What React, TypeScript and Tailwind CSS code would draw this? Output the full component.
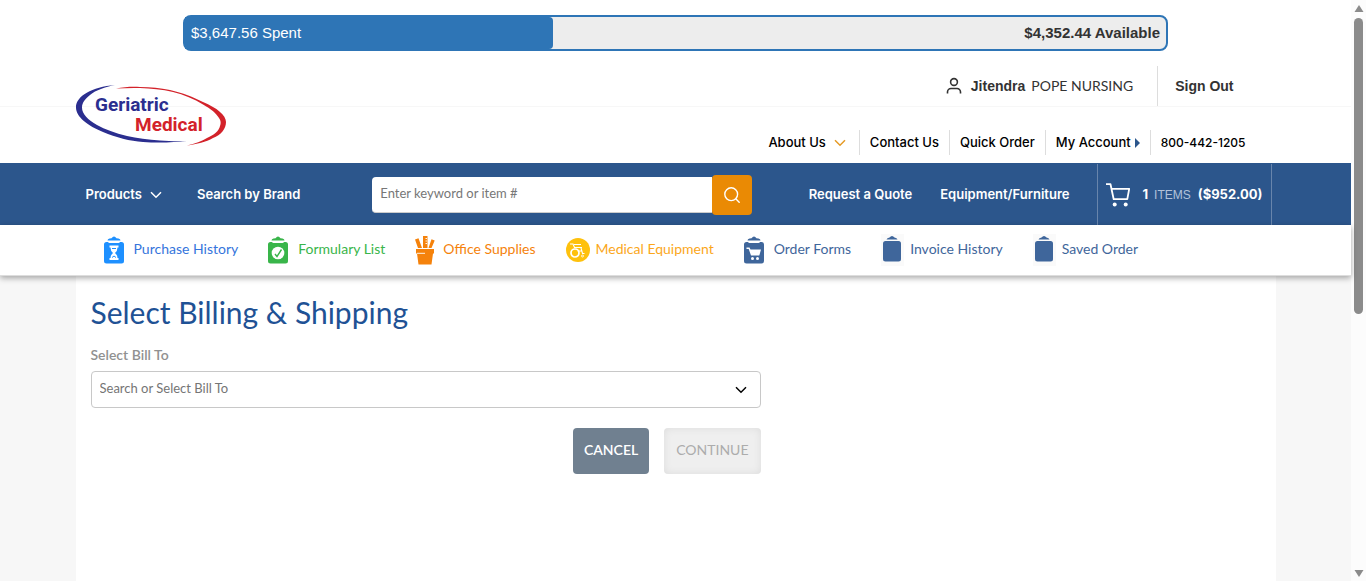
import React from "react";

type IconProps = { className?: string };

const Logo = () => (
  <svg width="151" height="61" viewBox="0 0 151 61" role="img" aria-label="Geriatric Medical">
    <path
      fill="#2b2e8f"
      d="M39 0C16 2 0 11 0 22.500C0 32 12 41 27 47C40 52.500 54 56.200 67 57C82 58 98 57.500 111 56C101 56.500 92 56 84 55.500C72 54.500 61 53 51 51C39 48 29 44.500 21 40C12 35 6 29 6 22.500C6 18 9 14 14 10C20 5 29 2 39 0Z"
    />
    <path
      fill="#d3222a"
      d="M40 3.500C48 2 56 1.500 64 2C75 2 84 3 94 5C107 8 117 12 127 17C141 23 150 30 150 37C150 44 145 50 137 53C130 57 121 59 111 60.500C119 58.500 126 56 131 53C138 50 143 46 144 41C145 38 145 36 143 33C140 28 135 24 127 19.500C118 14 108 9.500 97 7C86 4.500 75 3.300 64 3C56 2.800 48 3 40 3.500Z"
    />
    <text x="19" y="26" fill="#2b2e8f" fontSize="19" fontWeight="700" fontFamily="Roboto, sans-serif">
      Geriatric
    </text>
    <text x="59" y="46" fill="#d3222a" fontSize="19" fontWeight="700" fontFamily="Roboto, sans-serif">
      Medical
    </text>
  </svg>
);

const UserIcon = () => (
  <svg width="16" height="18" viewBox="0 0 16 18" fill="none" stroke="#333" strokeWidth="1.6" aria-hidden="true">
    <circle cx="8" cy="5" r="3.400" />
    <path d="M1.500 16.500V15a3.500 3.500 0 0 1 3.500-3.500h6a3.500 3.500 0 0 1 3.500 3.500v1.500" />
  </svg>
);

const Chevron = ({ className }: IconProps) => (
  <svg className={className} width="12" height="8" viewBox="0 0 12 8" fill="none" stroke="currentColor" strokeWidth="1.500" aria-hidden="true">
    <path d="M1 1.200l5 5 5-5" />
  </svg>
);

const SearchIcon = () => (
  <svg width="16" height="16" viewBox="0 0 16 16" fill="none" stroke="#fff" strokeWidth="1.400" strokeLinecap="round" aria-hidden="true">
    <circle cx="7.200" cy="7.200" r="6.400" />
    <path d="M12 12l3.200 3.200" />
  </svg>
);

const CartIcon = () => (
  <svg width="24" height="24" viewBox="0 0 24 24" fill="none" stroke="#fff" strokeWidth="1.800" strokeLinejoin="round" aria-hidden="true">
    <path d="M0 1.200h4.500l3.200 15h13.600L23.200 5.800H5.500" />
    <circle cx="8.700" cy="21.500" r="2" fill="#fff" stroke="none" />
    <circle cx="19.700" cy="21.500" r="2" fill="#fff" stroke="none" />
  </svg>
);

const Board = ({ color, children }: { color: string; children?: React.ReactNode }) => (
  <svg width="20" height="28" viewBox="0 0 20 28" aria-hidden="true">
    <path fill={color} d="M3.500 4.500Q3.500 3 5.500 2.600L7.500 2.200Q10-1.200 12.500 2.200l2 .4q2 .4 2 1.900z" />
    <path fill={color} d="M2.500 6H4q.5 1 1.500 1h9q1 0 1.500-1h1.500Q20 6 20 8.500V25q0 2.500-2.500 2.500h-15Q0 27.500 0 25V8.500Q0 6 2.500 6z" />
    {children}
  </svg>
);

const HistoryIcon = () => (
  <Board color="#1e90ff">
    <path fill="#fff" d="M5.500 9.500h9v2h-1q0 3.500-2.500 5.500 2.500 2 2.500 5h1v2h-9v-2h1q0-3 2.500-5-2.500-2-2.500-5.500h-1z" />
    <path stroke="#1e90ff" strokeWidth="1" fill="none" d="M8 12.500h4M8 21.500q2-3 4 0" />
  </Board>
);

const FormularyIcon = () => (
  <Board color="#39b54a">
    <circle cx="10" cy="17" r="6.300" fill="#fff" />
    <path d="M7 18l2 2.500 4.500-7" fill="none" stroke="#39b54a" strokeWidth="1.400" />
  </Board>
);

const OrderIcon = () => (
  <Board color="#3f669b">
    <path fill="#fff" d="M2.500 11.500h3l1 2h10.500l-1.700 6H7l-2.300-6.500H2.500z" />
    <circle cx="8.500" cy="22.500" r="1.500" fill="#fff" />
    <circle cx="13.500" cy="22.500" r="1.500" fill="#fff" />
  </Board>
);

const PlainIcon = () => (
  <svg width="23" height="32" viewBox="0 0 23 32" aria-hidden="true">
    <rect width="23" height="32" fill="#fafafa" />
    <path fill="#3f669b" d="M5.500 5.500Q6 4 8.500 3.500q2.500-3 5 0Q16 4 16.500 5.500z" />
    <rect x="2" y="7" width="18" height="20.500" rx="2.500" fill="#3f669b" />
  </svg>
);

const SuppliesIcon = () => (
  <svg width="20" height="29" viewBox="0 0 20 29" fill="#f5820b" aria-hidden="true">
    <path d="M0 3.500l3.500-1.200L7 12H3zM8 0h4.500v12H8zM16.500 3.200l3.200 1.300L16.500 12h-3z" />
    <path d="M1 13h18v4.500h-1L16.500 28.500h-13L2 17.500H1z" />
    <path d="M10.500 2.500H12M10.500 5H12M10.500 7.500H12M2 17.300h8" stroke="#fff" strokeWidth=".9" />
  </svg>
);

const WheelchairIcon = () => (
  <svg width="24" height="24" viewBox="0 0 24 24" fill="none" stroke="#fff" strokeWidth="1.100" aria-hidden="true">
    <circle cx="12" cy="12" r="12" fill="#fec10d" stroke="none" />
    <circle cx="9" cy="15" r="4" strokeWidth="1.700" />
    <path d="M4 6h3l1.500 3.500M8 6.500h7M8 9.500h8M15 10l1.500 5.500h2M11.500 13h4" />
    <circle cx="16.500" cy="18" r="1" strokeWidth=".8" />
  </svg>
);

const quickLinks = [
  { label: "Purchase History", icon: <HistoryIcon />, color: "text-[#3575dc]", gap: "gap-[10px]" },
  { label: "Formulary List", icon: <FormularyIcon />, color: "text-[#39b54a]", gap: "gap-[10px]" },
  { label: "Office Supplies", icon: <SuppliesIcon />, color: "text-[#f5820b]", gap: "gap-2" },
  { label: "Medical Equipment", icon: <WheelchairIcon />, color: "text-[#fba71b]", gap: "gap-[6px]" },
  { label: "Order Forms", icon: <OrderIcon />, color: "text-[#3f669b]", gap: "gap-[10px]" },
  { label: "Invoice History", icon: <PlainIcon />, color: "text-[#3f669b]", gap: "gap-[6px]" },
  { label: "Saved Order", icon: <PlainIcon />, color: "text-[#3f669b]", gap: "gap-[6px]" },
];

const Header = () => (
  <header className="shrink-0 bg-white">
    <div className="mx-auto mt-[15px] flex h-9 max-w-[985px] items-center justify-between rounded-lg border-2 border-[#2e75b6] bg-[#ededed] font-['Liberation_Sans',sans-serif] text-[15px]">
      <div className="flex h-full w-[37.500%] items-center rounded-r bg-[#2e75b6] pl-[6px] text-white">$3,647.56 Spent</div>
      <div className="pr-[6px] font-bold text-[#333]">$4,352.44 Available</div>
    </div>

    <div className="bg-[linear-gradient(#f7f7f7,#f7f7f7)] bg-[length:100%_1px] bg-[position:0_55px] bg-no-repeat">
      <div className="mx-auto flex h-28 max-w-[1200px] items-start justify-between">
        <a href="#home" className="mt-[34px]">
          <Logo />
        </a>
        <div className="flex flex-col items-end pt-[15px]">
          <div className="mr-[42px] flex h-10 items-center text-[14px] text-[#333]">
            <UserIcon />
            <span className="ml-[9px] font-['Liberation_Sans',sans-serif] font-bold">Jitendra</span>
            <span className="ml-[6px] pb-px font-[Lato,sans-serif]">POPE NURSING</span>
            <a href="#signout" className="ml-6 flex h-full items-center border-l border-[#ddd] pl-[17px] font-['Liberation_Sans',sans-serif] font-bold">
              Sign Out
            </a>
          </div>
          <nav className="mt-6 mr-5 flex h-[25px] items-center font-[Inter,sans-serif] text-[13px] font-medium text-black" aria-label="Account">
            <a href="#about" className="flex h-full items-center gap-2 pr-[13px]">
              About Us <Chevron className="text-[#e59a25]" />
            </a>
            <a href="#contact" className="flex h-full items-center border-l border-[#ddd] px-[10px]">Contact Us</a>
            <a href="#quick" className="flex h-full items-center border-l border-[#ddd] px-[10px]">Quick Order</a>
            <a href="#account" className="flex h-full items-center gap-1 border-l border-[#ddd] px-[10px]">
              My Account
              <svg width="5" height="10" viewBox="0 0 5 10" fill="#2c568c" aria-hidden="true"><path d="M0 0l5 5-5 5z" /></svg>
            </a>
            <a href="tel:8004421205" className="flex h-full items-center border-l border-[#ddd] px-[10px] text-[12px]">800-442-1205</a>
          </nav>
        </div>
      </div>
    </div>

    <div className="bg-[#2c568c]">
      <div className="mx-auto flex h-[62px] max-w-[1200px] items-center px-[10px] pt-px pr-1 font-[Inter,sans-serif] text-[13px] font-semibold text-white">
        <a href="#products" className="flex items-center gap-2">Products <Chevron /></a>
        <a href="#brand" className="ml-[35px]">Search by Brand</a>
        <form className="mr-auto ml-[72px] flex items-center" onSubmit={(e) => e.preventDefault()}>
          <input aria-label="Search" placeholder="Enter keyword or item #" className="h-9 w-[340px] rounded-l border-b border-[#ccc] bg-white px-2 pb-[2px] font-[Lato,sans-serif] text-[13px] font-normal text-[#333] outline-none placeholder:text-[#777]" />
          <button aria-label="Submit search" className="flex size-10 items-center justify-center rounded bg-[#ea8a04]"><SearchIcon /></button>
        </form>
        <a href="#quote">Request a Quote</a>
        <a href="#furniture" className="ml-7">Equipment/Furniture</a>
        <a href="#cart" className="ml-7 flex h-full items-center border-x border-[#6885ac] px-2 text-[13px] font-bold">
          <CartIcon />
          <span className="ml-3">1</span>
          <span className="ml-[6px] font-['Liberation_Sans',sans-serif] text-[12px] font-normal text-[#b3c3da]">ITEMS</span>
          <span className="ml-[7px]">($952.00)</span>
        </a>
      </div>
    </div>

    <div className="relative border-b border-[#ddd] bg-white shadow-[0_2px_6px_rgba(0,0,0,0.350)]">
      <nav className="mx-auto flex h-[50px] max-w-[1200px] items-center gap-[30px] pl-7 font-[Lato,sans-serif] text-[14px]" aria-label="Shortcuts">
        {quickLinks.map((l) => (
          <a key={l.label} href="#shortcut" className={`flex items-center ${l.gap} ${l.color}`}>
            {l.icon}
            <span className="pb-[3px]">{l.label}</span>
          </a>
        ))}
      </nav>
    </div>
  </header>
);

const BillingForm = () => (
  <main className="mx-auto w-full max-w-[1200px] grow bg-white px-[15px] pt-4 font-[Lato,sans-serif]">
    <h1 className="text-[30px] leading-10 text-[#1f5295]">Select Billing &amp; Shipping</h1>
    <form className="max-w-[670px]" onSubmit={(e) => e.preventDefault()}>
      <label htmlFor="bill-to" className="mt-[13px] block text-[14px] leading-5 font-semibold text-[#919191]">Select Bill To</label>
      <div className="mt-[6px] flex h-[37px] items-center rounded border border-[#c8c8c8]">
        <input id="bill-to" placeholder="Search or Select Bill To" className="h-full grow bg-transparent px-2 pb-[3px] text-[13px] outline-none placeholder:text-[#757575]" />
        <button type="button" aria-label="Show bill-to options" className="mr-[13px]"><Chevron className="text-black" /></button>
      </div>
      <div className="mt-5 flex justify-end gap-[15px] text-[14px]">
        <button type="button" className="h-[46px] rounded bg-[#708090] px-[11px] pb-[3px] font-semibold text-white">CANCEL</button>
        <button disabled className="h-[46px] rounded bg-[#efefef] px-3 pb-[3px] text-[#acacac] shadow-[inset_0_0_8px_rgba(0,0,0,0.080)]">CONTINUE</button>
      </div>
    </form>
  </main>
);

const ScrollRail = () => (
  <div className="flex w-[15px] shrink-0 flex-col items-center bg-[#fcfcfc] pt-[5px] pb-1" aria-hidden="true">
    <svg width="10" height="7" viewBox="0 0 10 7" fill="#8b8b8b"><path d="M5 0l4.500 7h-9z" /></svg>
    <div className="mt-[6px] h-[296px] w-[9px] rounded-full bg-[#8b8b8b]" />
    <svg className="mt-auto" width="10" height="7" viewBox="0 0 10 7" fill="#8b8b8b"><path d="M5 7L.5 0h9z" /></svg>
  </div>
);

export default function App() {
  return (
    <div className="flex min-h-screen">
      <div className="flex min-w-0 grow flex-col bg-[#f7f7f7]">
        <Header />
        <BillingForm />
      </div>
      <ScrollRail />
    </div>
  );
}
